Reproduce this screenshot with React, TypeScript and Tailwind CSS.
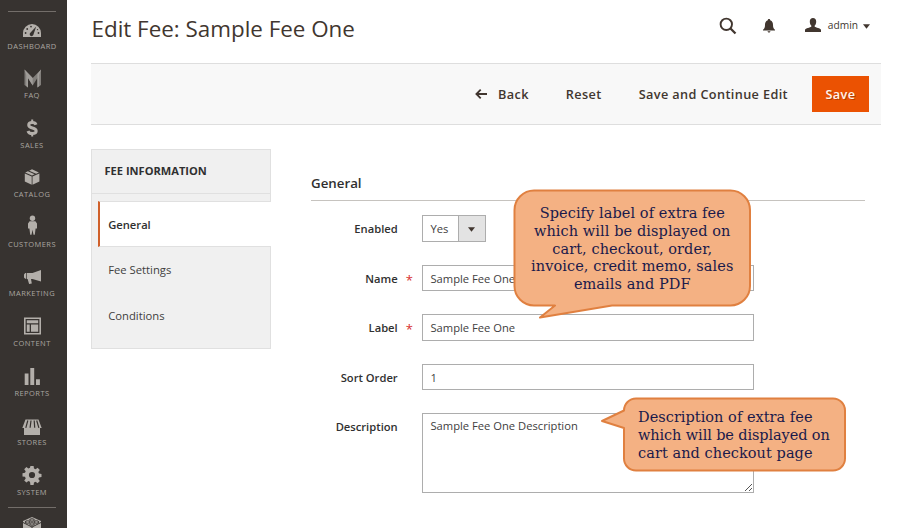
import type { ReactNode } from "react";

const menu: { label: string; icon: ReactNode }[] = [
  {
    label: "Dashboard",
    icon: (
      <>
        <path d="M3 20v-4a9 9 0 0 1 18 0v4Z" />
        <g fill="#373330">
          <circle cx="5.6" cy="16" r=".9" />
          <circle cx="7.2" cy="12" r=".9" />
          <circle cx="11" cy="9.6" r=".9" />
          <circle cx="18.5" cy="16" r=".9" />
          <circle cx="17.5" cy="12.6" r=".7" />
          <path d="m16.2 9.6-5.600 6a1.900 1.900 0 1 0 2.800 2.200Z" />
        </g>
      </>
    ),
  },
  {
    label: "FAQ",
    icon: (
      <g>
        <path fill="#817e7a" d="M4.500 3.500 12.700 12 21 3.500V19l-3.600 2.500V12l-4.700 7.500L8 12v9.500L4.500 19Z" />
        <path fill="#a09d99" d="M4.500 3.500 12.700 12v7.500L8 12v9.500L6.300 20V9ZM21 3.500 19.200 9v11l-1.800 1.500V8Z" />
      </g>
    ),
  },
  {
    label: "Sales",
    icon: (
      <g fill="none" stroke="#b3afaa" strokeWidth="3">
        <path d="M16 8.800C15.500 7.200 14.300 6.600 12.200 6.600c-2.200 0-3.500.9-3.500 2.500 0 4 7.500 1.900 7.500 5.900 0 1.700-1.500 2.600-3.900 2.600-2.300 0-3.800-.9-4.300-2.600" />
        <path strokeWidth="2" d="M12.200 3.600v3M12.200 17.500v3" />
      </g>
    ),
  },
  {
    label: "Catalog",
    icon: (
      <path d="m4.800 8.600 6.900 2.900v8.300l-6.900-3.200ZM19.400 8.600l-6.900 2.900v8.300l6.900-3.200ZM5.200 7.500l2.700-1.200 6.700 3-2.600 1.300ZM9.200 5.700 12 4.200l6.900 3.200-2.800 1.400Z" />
    ),
  },
  {
    label: "Customers",
    icon: (
      <>
        <circle cx="12.500" cy="3.200" r="2.700" />
        <path d="M9.600 6.300h5.800l1.600 2.300v5h-1.400l-.8 6.200h-1.300l-1-5-1 5h-1.300l-.8-6.200H8v-5Z" />
      </>
    ),
  },
  {
    label: "Marketing",
    icon: <path d="M21 6v11.500l-8.500-2.600H11l.8 4.600-2.700.5-1.500-5.100H7V8.900h5.500ZM6.300 9v5.800H5.200L4 13.500v-3L5.200 9Z" />,
  },
  {
    label: "Content",
    icon: (
      <>
        <path fillRule="evenodd" d="M4 3.500h17v17H4ZM5.600 5.100v13.800h13.800V5.100Z" />
        <path d="M6.800 6.300h11.400v2.900H6.800ZM6.800 10.400h2.900v7.300H6.800ZM11 10.400h7.200v7.300H11Z" />
      </>
    ),
  },
  {
    label: "Reports",
    icon: <path d="M4.700 9.500h3.800V21H4.700ZM10.300 4h3.900v17h-3.900ZM16 15.300h3.900V21H16Z" />,
  },
  {
    label: "Stores",
    icon: (
      <>
        <path d="M5.500 6.500h13l3.200 8.500H20v7H4v-7H2.300Z" />
        <path fill="none" stroke="#373330" strokeWidth="1.200" d="m7.800 7.500-2 7.300M11 7.500l-.9 7.300M14.200 7.500l.5 7.300M16.700 7.500l2.200 7.300" />
      </>
    ),
  },
  {
    label: "System",
    icon: (
      <path
        fillRule="evenodd"
        d="m10.400 3h3.200l.4 2.500 1.600.7 2-1.500 2.200 2.200-1.500 2 .7 1.600 2.500.4v3.200l-2.500.4-.7 1.600 1.500 2-2.200 2.200-2-1.500-1.600.7-.4 2.500h-3.200L10 18.800l-1.600-.7-2 1.500-2.200-2.200 1.500-2-.7-1.600-2.500-.4v-3.200l2.500-.4.7-1.600-1.500-2 2.200-2.200 2 1.500 1.600-.7ZM12 8.900a3.100 3.100 0 1 0 0 6.200 3.100 3.100 0 0 0 0-6.200Z"
      />
    ),
  },
];

function Sidebar() {
  return (
    <aside className="flex h-full w-[67px] shrink-0 flex-col bg-[#373330]">
      <div className="ml-2 mt-[11px] h-px w-12 shrink-0 bg-[#736e6a]" />
      <nav className="mt-[4.500px] flex flex-col">
        {menu.map((m) => (
          <a key={m.label} className="flex h-[49.600px] w-16 shrink-0 flex-col items-center">
            <svg viewBox="0 0 24 24" className="size-6 shrink-0" fill="#b3afaa">
              {m.icon}
            </svg>
            <span className="text-[7.500px] uppercase leading-[10px] tracking-[0.450px] text-[#aaa6a0]">{m.label}</span>
          </a>
        ))}
      </nav>
      <div className="-mt-[5.500px] ml-2 h-px w-12 shrink-0 bg-[#736e6a]" />
      <svg viewBox="0 0 24 16" className="ml-5 mt-[8px] h-4 w-6 shrink-0" fill="#b3afaa">
        <path d="m12 1 9 4v11H3V5Z" />
        <g fill="none" stroke="#373330" strokeWidth="1">
          <path d="m3 6.500 9 4.500 9-4.500M12 11v5" />
          <ellipse cx="12" cy="4" rx="2.400" ry="1.200" />
          <ellipse cx="7.600" cy="6" rx="2.400" ry="1.200" />
          <ellipse cx="16.400" cy="6" rx="2.400" ry="1.200" />
          <ellipse cx="12" cy="8" rx="2.400" ry="1.200" />
        </g>
      </svg>
    </aside>
  );
}

function Header() {
  return (
    <header className="flex h-[63px] items-start">
      <h1 className="mt-[12px] whitespace-nowrap pl-[0.500px] text-[22.400px] leading-[33px] text-[#41362f]">Edit Fee: Sample Fee One</h1>
      <div className="ml-auto mt-[14px] flex h-6 items-center pr-[11px] text-[#41362f]">
        <svg viewBox="0 0 18 18" className="h-[18px] w-[18px]" fill="none" stroke="currentColor">
          <circle cx="7.300" cy="7.300" r="5.700" strokeWidth="1.900" />
          <path d="m11.500 11.500 5 5" strokeWidth="2.300" />
        </svg>
        <svg viewBox="0 0 12 14" className="ml-[26px] h-[14px] w-3" fill="currentColor">
          <path d="M6 0c.8 0 1.200.5 1.200 1.200C9.500 1.900 10 4 10 6c0 2.500.7 3.700 2 4.800v.8H0v-.8C1.300 9.700 2 8.500 2 6c0-2 .5-4.100 2.800-4.800C4.800.5 5.200 0 6 0ZM4.500 12.300h3c-.2.800-.8 1.200-1.500 1.200s-1.300-.4-1.500-1.200Z" />
        </svg>
        <svg viewBox="0 0 16 14" className="-mt-[2px] ml-[30px] h-[14px] w-4" fill="currentColor">
          <path d="M8 0c2 0 3.200 1.400 3.200 3.400 0 2-.6 3.300-1.500 4.100v1.300c1 .9 5.800 1.400 6.300 3V14H0v-2.200c.5-1.600 5.300-2.100 6.300-3V7.500c-.9-.8-1.500-2.100-1.500-4.100C4.800 1.400 6 0 8 0Z" />
        </svg>
        <span className="-mt-[2px] ml-[7px] text-[10.200px] leading-4">admin</span>
        <svg viewBox="0 0 8 5" className="ml-[5px] h-[5px] w-[7px]" fill="currentColor">
          <path d="M0 0h8L4 5Z" />
        </svg>
      </div>
    </header>
  );
}

function Toolbar() {
  return (
    <div className="flex h-[62px] items-center justify-end border-y border-[#dedede] bg-[#f8f8f8] pr-3 text-[12.700px] font-semibold tracking-[0.380px] text-[#41362f]">
      <button className="mt-px flex items-center whitespace-nowrap">
        <svg viewBox="0 0 12 10" className="mr-[11px] h-[10px] w-3" fill="none" stroke="currentColor" strokeWidth="1.800">
          <path d="M12 5H1.500M5.700.7 1.400 5l4.300 4.300" />
        </svg>
        Back
      </button>
      <button className="ml-[37px] mt-px">Reset</button>
      <button className="ml-[37px] mt-px whitespace-nowrap">Save and Continue Edit</button>
      <button className="ml-[24px] h-9 w-[57px] bg-[#eb5202] pt-px text-[#fff4ec] [text-shadow:1px_1px_0_rgba(0,0,0,0.250)]">Save</button>
    </div>
  );
}

function Tabs() {
  return (
    <div className="flex h-[200px] w-[180px] shrink-0 flex-col border border-[#e0e0e0] bg-[#f0f0f0] text-[11.250px] text-[#41403e]">
      <div className="h-[44px] border-b border-[#e0e0e0] pl-[12.500px] text-[11.100px] font-bold leading-[42px] text-[#303030]">FEE INFORMATION</div>
      <div className="-mr-px ml-[6px] mt-[7px] h-[46px] border-y border-l-2 border-y-[#e0e0e0] border-l-[#d0602a] bg-white pl-[8.200px] text-[11.200px] font-semibold leading-[45px] text-[#303030]">
        General
      </div>
      <div className="h-[46px] pl-[16.200px] leading-[46px]">Fee Settings</div>
      <div className="h-[46px] pl-[16.200px] leading-[46px]">Conditions</div>
    </div>
  );
}

function Field({ label, required, gap, children }: { label: string; required?: boolean; gap: string; children: ReactNode }) {
  return (
    <div className={`flex items-start ${gap}`}>
      <div className="h-[27px] w-[86.700px] shrink-0 text-right text-[11.200px] font-semibold leading-[28px] text-[#303030]">{label}</div>
      <div className="h-[27px] w-[24.300px] shrink-0 pl-[8px] text-[13px] leading-[30px] text-[#d83030]">{required ? "*" : ""}</div>
      {children}
    </div>
  );
}

const box = "w-[332px] border border-[#adadad] bg-white pl-[7.500px] text-[11.200px] text-[#41403e]";

function General() {
  return (
    <section className="ml-[40px] w-[554px] pt-[19px]">
      <h2 className="h-[33px] border-b border-[#c6c3bf] text-[13.300px] font-semibold leading-[30px] text-[#303030]">General</h2>
      <div className="pt-[14px]">
        <Field label="Enabled" gap="mb-[23px]">
          <div className="flex h-[27px] w-16 border border-[#adadad] text-[11.200px] leading-[26px] text-[#41403e]">
            <span className="w-[35px] shrink-0 pl-[7.500px]">Yes</span>
            <span className="flex grow items-center justify-center border-l border-[#adadad] bg-[#e3e3e3]">
              <svg viewBox="0 0 8 5" className="mt-[2px] h-[5px] w-[7px]" fill="#41362f">
                <path d="M0 0h8L4 5Z" />
              </svg>
            </span>
          </div>
        </Field>
        <Field label="Name" required gap="mb-[22px]">
          <div className={`${box} h-[26px] mb-px leading-[25px]`}>Sample Fee One</div>
        </Field>
        <Field label="Label" required gap="mb-[23px]">
          <div className={`${box} h-[27px] leading-[26px]`}>Sample Fee One</div>
        </Field>
        <Field label="Sort Order" gap="mb-[22px]">
          <div className={`${box} h-[26px] mb-px leading-[26px]`}>1</div>
        </Field>
        <Field label="Description" gap="mb-0">
          <div className={`${box} flex h-[80px] justify-between leading-[24px]`}>
            <span>Sample Fee One Description</span>
            <svg viewBox="0 0 9 9" className="h-[9px] w-[9px] self-end" fill="none" stroke="#555">
              <path d="M1 8 8 1M5 8l3-3" />
            </svg>
          </div>
        </Field>
      </div>
    </section>
  );
}

/* Annotation balloons float over the form. */
function Callouts() {
  return (
    <>
      <div className="absolute left-[512px] top-[188px] h-[132px] w-[240px]">
        <svg viewBox="0 0 240 132" className="absolute inset-0 h-full w-full" fill="#f4b183" stroke="#e08040" strokeWidth="2" strokeLinejoin="round">
          <path d="M22 2.500H218.500a19.500 19.500 0 0 1 19.500 19.500V98a19.500 19.500 0 0 1-19.500 19.500H100L28 129.500 43 117.500H22A19.500 19.500 0 0 1 2.500 98V22A19.500 19.500 0 0 1 22 2.500Z" />
        </svg>
        <div className="relative flex flex-col items-center whitespace-nowrap pl-[0.500px] pt-[17px] font-['DejaVu_Serif',serif] text-[14.500px] leading-[17.750px] tracking-[0.080px] text-[#1a1a4b]">
          <span>Specify label of extra fee</span>
          <span>which will be displayed on</span>
          <span>cart, checkout, order,</span>
          <span>invoice, credit memo, sales</span>
          <span>emails and PDF</span>
        </div>
      </div>
      <div className="absolute left-[600px] top-[396px] h-[76px] w-[247px]">
        <svg viewBox="0 0 247 76" className="absolute inset-0 h-full w-full" fill="#f4b183" stroke="#e08040" strokeWidth="2" strokeLinejoin="round">
          <path d="M36 2.500H233a12 12 0 0 1 12 12V62.500a12 12 0 0 1-12 12H36a12 12 0 0 1-12-12V32L2 25 24 14.500a12 12 0 0 1 12-12Z" />
        </svg>
        <div className="relative flex flex-col whitespace-nowrap pl-[38px] pt-[12px] font-['DejaVu_Serif',serif] text-[14.500px] leading-[18px] text-[#1a1a4b]">
          <span className="tracking-[0.030px]">Description of extra fee</span>
          <span className="tracking-[-0.110px]">which will be displayed on</span>
          <span className="tracking-[0.060px]">cart and checkout page</span>
        </div>
      </div>
    </>
  );
}

export default function App() {
  return (
    <div className="relative flex h-[528px] w-[904px] overflow-hidden bg-white font-['Open_Sans','Noto_Sans',sans-serif]">
      <Sidebar />
      <main className="ml-6 flex w-[790px] flex-col">
        <Header />
        <Toolbar />
        <div className="mt-6 flex items-start">
          <Tabs />
          <General />
        </div>
      </main>
      <Callouts />
    </div>
  );
}
